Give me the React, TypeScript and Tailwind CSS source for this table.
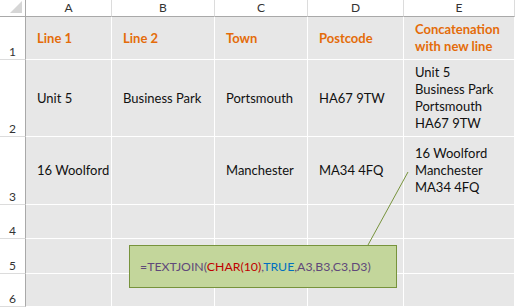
import React from "react";

const cols = ["A", "B", "C", "D", "E"];

type Row = { n: number; cells: React.ReactNode[]; head?: boolean };

const rows: Row[] = [
  { n: 1, head: true, cells: ["Line 1", "Line 2", "Town", "Postcode", ["Concatenation", "with new line"]] },
  { n: 2, cells: ["Unit 5", "Business Park", "Portsmouth", "HA67 9TW", ["Unit 5", "Business Park", "Portsmouth", "HA67 9TW"]] },
  { n: 3, cells: ["16 Woolford", "", "Manchester", "MA34 4FQ", ["16 Woolford", "Manchester", "MA34 4FQ"]] },
  { n: 4, cells: ["", "", "", "", ""] },
  { n: 5, cells: ["", "", "", "", ""] },
  { n: 6, cells: ["", "", "", "", ""] },
];

function Cell({ value, head }: { value: React.ReactNode; head?: boolean }) {
  const lines = Array.isArray(value) ? value : value ? [value] : [];
  return (
    <div
      className={`flex flex-col justify-center border-r border-b border-white bg-[#e7e7e7] pl-[11px] leading-[17px] ${
        head ? "font-bold text-[#e46c0a]" : "text-[#111]"
      }`}
    >
      {lines.map((l, i) => (
        <span key={i} className="whitespace-nowrap">
          {l}
        </span>
      ))}
    </div>
  );
}

export default function App() {
  return (
    <div
      className="relative h-[307px] w-[515px] overflow-hidden bg-white text-[13px]"
      style={{ fontFamily: "Lato, 'Open Sans', sans-serif" }}
    >
      <div className="grid h-full grid-cols-[26px_86px_103px_93px_96px_1fr] grid-rows-[17px_43px_77px_68px_34px_35px_1fr]">
        <div className="relative border-r border-b border-[#a9a9a9] bg-white">
          <div className="absolute right-[3px] bottom-[3px] h-0 w-0 border-t-[12px] border-l-[12px] border-t-transparent border-l-transparent border-r-0 border-b-[12px] border-b-[#d6d6d6]" />
        </div>
        {cols.map((c) => (
          <div
            key={c}
            className="flex items-center justify-center border-r border-b border-r-[#dcdcdc] border-b-[#a9a9a9] bg-white text-[12px] text-[#333]"
          >
            {c}
          </div>
        ))}
        {rows.map((r) => (
          <React.Fragment key={r.n}>
            <div className="flex items-end justify-center border-r border-b border-r-[#a9a9a9] border-b-[#dcdcdc] bg-white pb-[1px] text-[12px] leading-none text-[#333]">
              {r.n}
            </div>
            {r.cells.map((v, i) => (
              <Cell key={i} value={v} head={r.head} />
            ))}
          </React.Fragment>
        ))}
      </div>

      <svg className="absolute top-0 left-0" width="515" height="307">
        <line x1="368" y1="245" x2="408" y2="172" stroke="#77933c" strokeWidth="1" />
      </svg>

      <div className="absolute top-[245px] left-[129px] flex h-[43px] w-[268px] items-center border border-[#77933c] bg-[#c3d69b] pt-[2px] pl-[10px] text-[12.3px] text-[#60497a]">
        <span className="whitespace-nowrap">
          =TEXTJOIN(<span className="text-[#c00000]">CHAR(10)</span>,<span className="text-[#0070c0]">TRUE</span>,A3,B3,C3,D3)
        </span>
      </div>
    </div>
  );
}
